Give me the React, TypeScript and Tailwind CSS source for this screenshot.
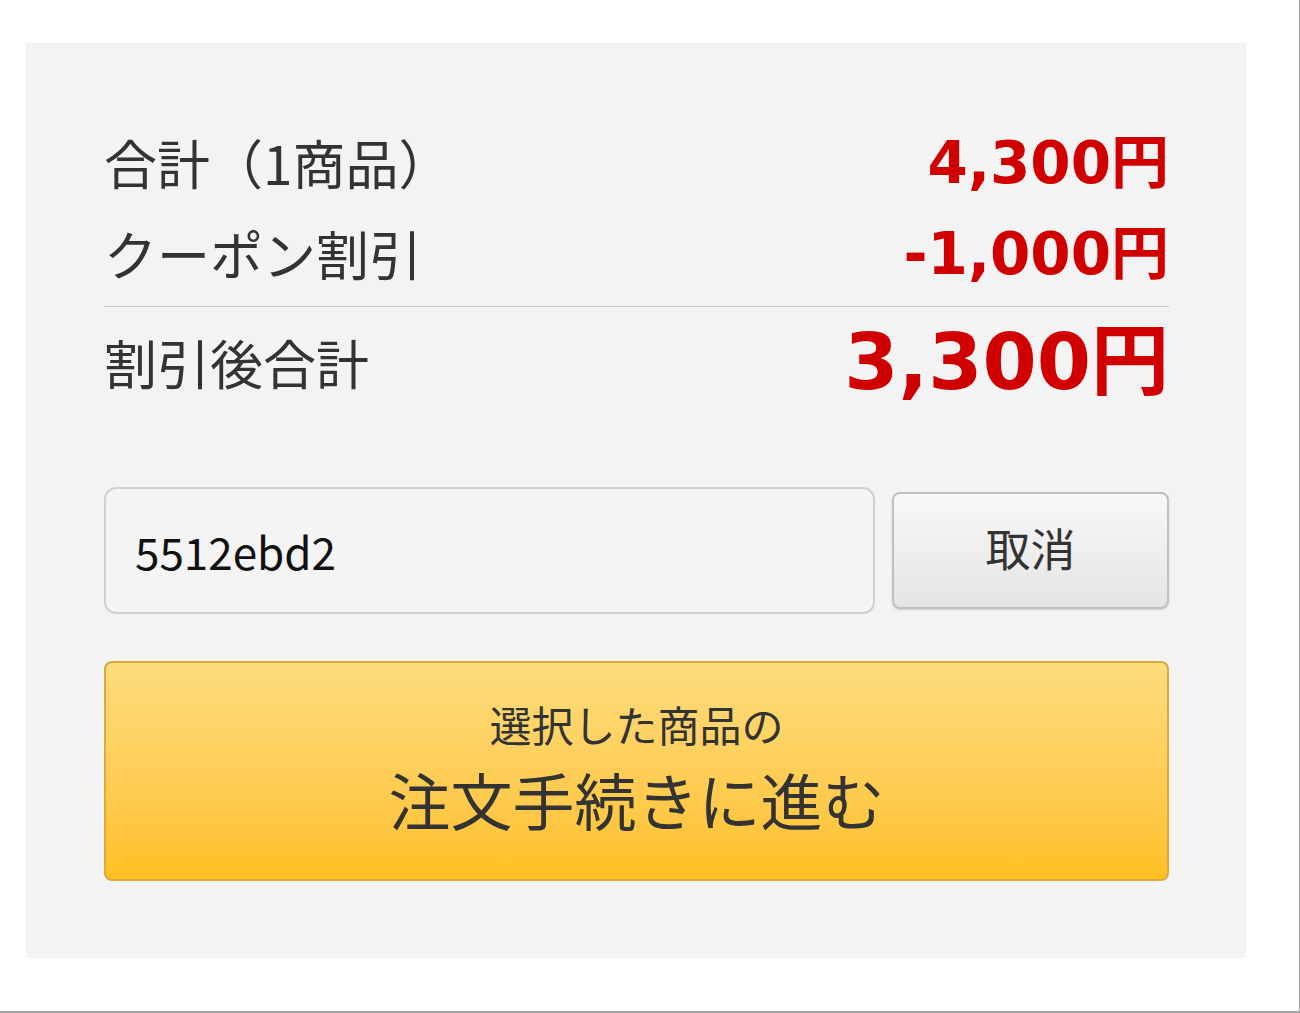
const jp = { fontFamily: '"Noto Sans CJK JP", "Noto Sans", sans-serif' }
const num = { fontFamily: '"DejaVu Sans", "Noto Sans CJK JP", sans-serif' }

function SummaryRow({ label, value, big }: { label: string; value: string; big?: boolean }) {
  return (
    <div className={`flex items-center justify-between ${big ? 'h-[110px]' : 'h-[91px]'}`}>
      <span className="text-[53px] leading-none text-[#333]">{label}</span>
      <span
        className={`font-bold leading-none text-[#d00000] ${big ? 'text-[78px]' : 'text-[58px]'}`}
        style={num}
      >
        {value}
      </span>
    </div>
  )
}

export default function App() {
  return (
    <div
      className="w-[1300px] h-[1013px] bg-white border-r border-b-2 border-[#a3a3a3] pt-[43px] pl-[26px]"
      style={jp}
    >
      <div className="w-[1220px] h-[915px] bg-[#f3f3f3] pt-[74px] pl-[78px] pr-[77px]">
        <SummaryRow label="合計（1商品）" value="4,300円" />
        <SummaryRow label="クーポン割引" value="-1,000円" />
        <div className="mt-[7px] h-px bg-[#c8c8c8]" />
        <SummaryRow label="割引後合計" value="3,300円" big />

        <div className="mt-[70px] flex items-center gap-[17px]">
          <div className="w-[771px] h-[127px] rounded-[12px] border-2 border-[#d0d0d0] bg-[#f4f4f4] flex items-center pl-[29px]">
            <span className="text-[44px] text-[#111]">5512ebd2</span>
          </div>
          <button className="w-[277px] h-[117px] rounded-[8px] border-2 border-[#c0c0c0] bg-gradient-to-b from-[#f8f8f8] to-[#e4e4e4] shadow-[0_1px_2px_rgba(0,0,0,0.15)] text-[45px] text-[#333] pb-[6px]">
            取消
          </button>
        </div>

        <button className="mt-[47px] w-full h-[220px] rounded-[8px] border-2 border-[#dcaa3c] bg-gradient-to-b from-[#fddc7c] to-[#ffc021] flex flex-col items-center justify-center text-[#333] pb-[9px]">
          <span className="text-[42px] leading-none">選択した商品の</span>
          <span className="mt-[23px] text-[62px] leading-none">注文手続きに進む</span>
        </button>
      </div>
    </div>
  )
}
